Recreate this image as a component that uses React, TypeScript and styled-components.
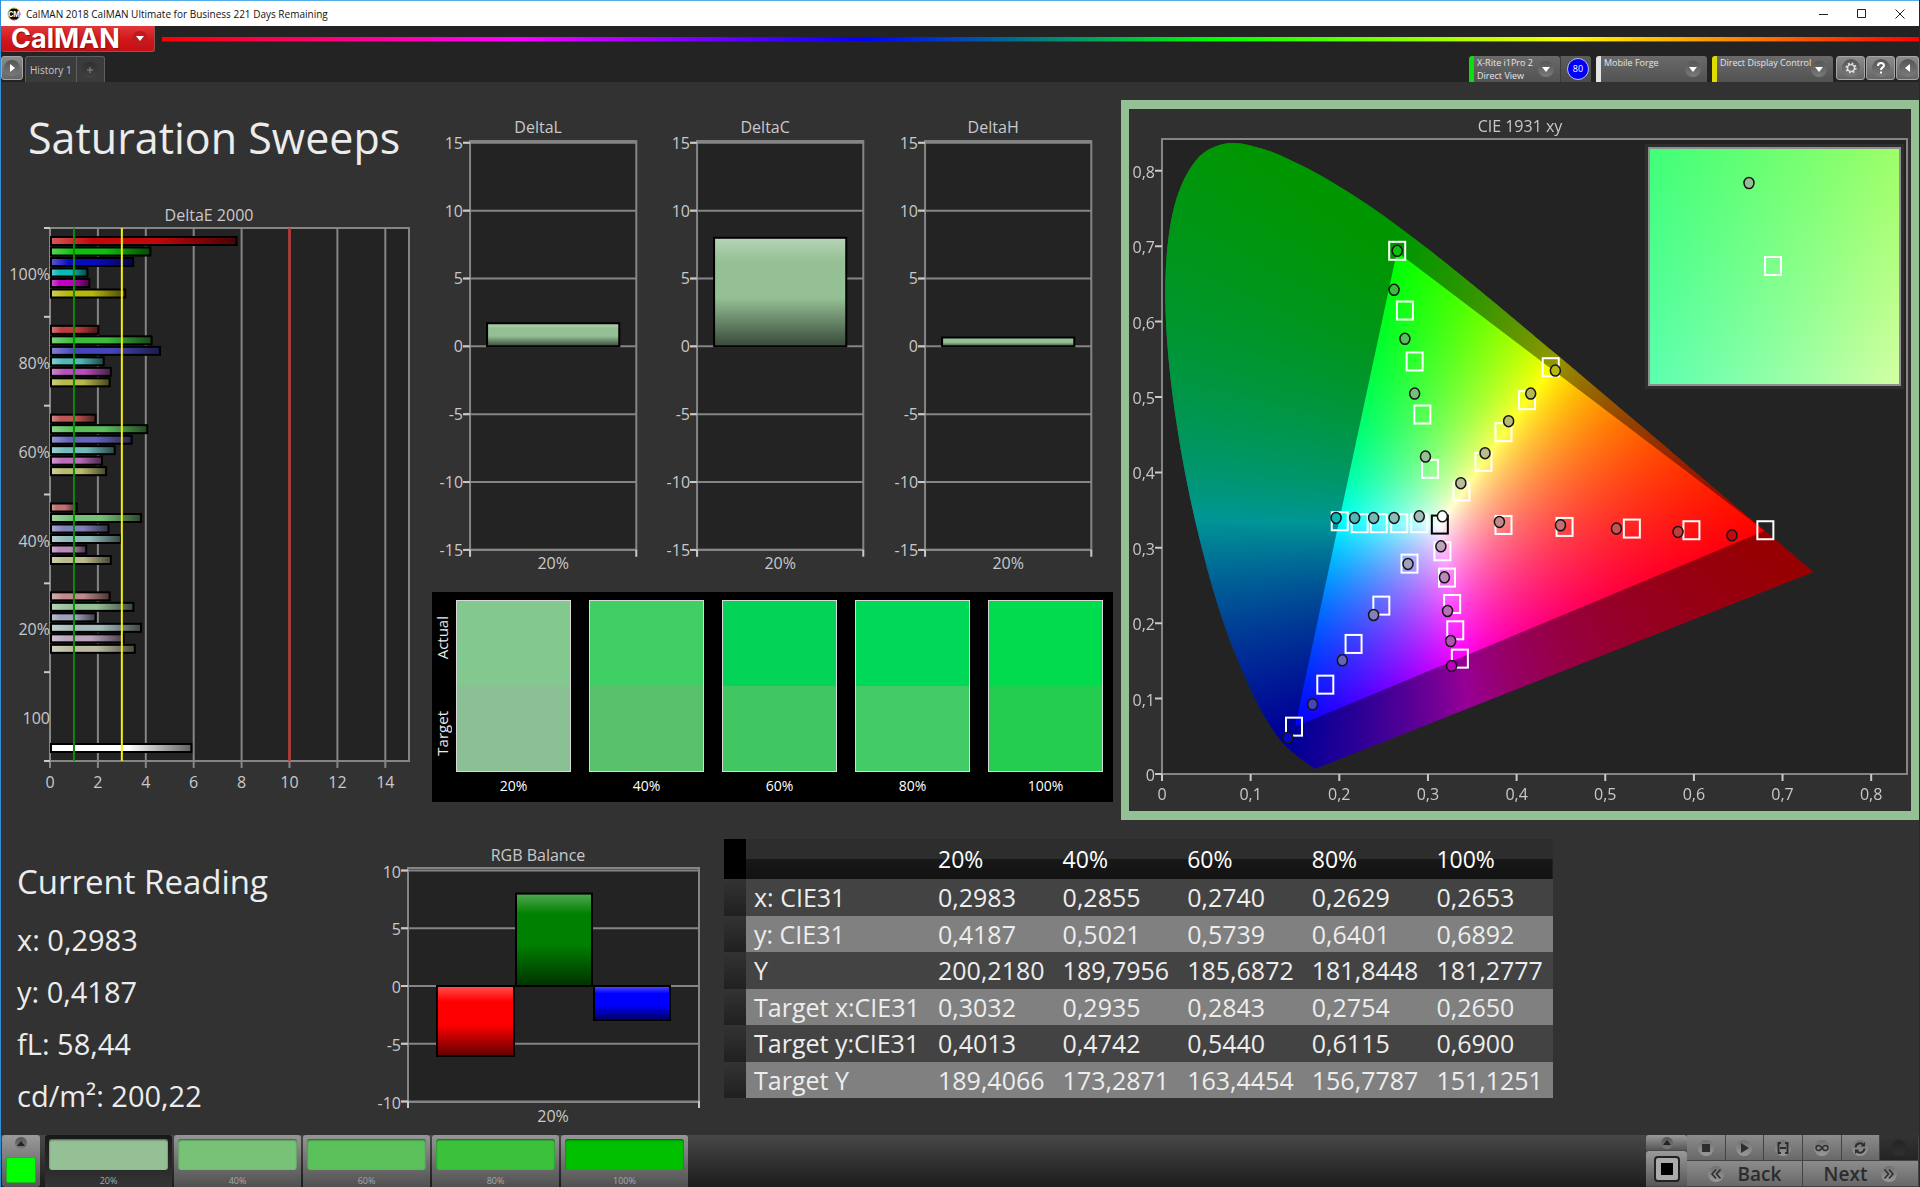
import React, { useEffect, useRef } from "react";
import styled, { createGlobalStyle, css } from "styled-components";

const GlobalStyle = createGlobalStyle`
  *, *::before, *::after { box-sizing: border-box; }
  html, body { margin: 0; padding: 0; background: #323232; }
  body { font-family: "Open Sans", "Noto Sans", sans-serif; color: #ececec; }
  button { font: inherit; color: inherit; border: 0; padding: 0; margin: 0; background: none; }
  h1, h2, p { margin: 0; font-weight: 400; }
`;

/* ---------- window frame ---------- */

const Window = styled.div`
  min-height: 100vh;
  display: flex;
  flex-direction: column;
  border-left: 1px solid #2f8fd2;
  border-right: 1px solid #26282a;
  background: #323232;
`;

const TitleBar = styled.header`
  height: 26px;
  flex: none;
  display: flex;
  align-items: center;
  padding-left: 6px;
  gap: 5px;
  background: #fff;
  border-top: 1px solid #55aee8;
  color: #111;
  font-size: 10px;
  line-height: 16px;
`;

const WindowButtons = styled.div`
  margin-left: auto;
  display: flex;
`;

const WindowButton = styled.button`
  width: 38px;
  height: 25px;
  display: grid;
  place-items: center;
`;

const Brand = styled.div`
  height: 29px;
  flex: none;
  display: flex;
  gap: 7px;
  background: #232323;
`;

const BrandButton = styled.button`
  width: 154px;
  height: 26px;
  padding: 0 6px 0 10px;
  display: flex;
  align-items: center;
  justify-content: space-between;
  background: linear-gradient(#e2383c, #cf1519 60%, #c80f13);
  border: 1px solid #8e5553;
  border-top: 0;
  border-left: 0;
  border-radius: 0 0 3px 3px;
  color: #fff;
  font: 700 27px/24px Inter, sans-serif;
  text-shadow: 1px 1px 1px #7a1012;
`;

const BrandCaret = styled.span`
  width: 16px;
  height: 16px;
  border-radius: 50%;
  display: grid;
  place-items: center;
  background: #bf1a1d;
`;

const Spectrum = styled.div`
  flex: 1;
  height: 5px;
  margin-top: 11px;
  border-bottom: 1px solid rgba(40, 40, 40, 0.6);
  background: linear-gradient(90deg, #f00 0%, #f0f 20%, #00f 40%, #0f0 60%, #ff0 80%, #f00 100%);
`;

const ToolRow = styled.div`
  height: 27px;
  flex: none;
  padding-top: 1px;
  display: flex;
  align-items: flex-start;
  background: #232323;
`;

const RoundWell = styled.span<{ $size?: number; $dark?: boolean }>`
  width: ${(p) => p.$size ?? 16}px;
  height: ${(p) => p.$size ?? 16}px;
  flex: none;
  border-radius: 50%;
  display: grid;
  place-items: center;
  background: ${(p) => (p.$dark ? "linear-gradient(#303030, #424242)" : "linear-gradient(#555, #7b7b7b)")};
`;

const SquareButton = styled.button<{ $w: number }>`
  width: ${(p) => p.$w}px;
  height: 24px;
  display: grid;
  place-items: center;
  border: 1px solid #a5a5a5;
  border-radius: 3px;
  background: linear-gradient(#8c8c8c, #666);
`;

const Tabs = styled.div`
  display: flex;
  margin-left: 2px;
  height: 26px;
  border: 1px solid #5f5f5f;
  border-bottom: 0;
  border-radius: 3px 3px 0 0;
  background: #3b3b3b;
`;

const Tab = styled.button`
  min-width: 28px;
  padding: 0 4px;
  display: flex;
  align-items: center;
  justify-content: center;
  color: #c8c8c8;
  font-size: 10px;
  line-height: 16px;

  & + & {
    border-left: 1px solid #5f5f5f;
  }
`;

const Devices = styled.div`
  margin-left: auto;
  display: flex;
  align-items: flex-start;
`;

const Device = styled.button<{ $accent: string; $w: number }>`
  width: ${(p) => p.$w}px;
  height: 26px;
  display: flex;
  align-items: center;
  padding-right: 6px;
  border-left: 5px solid ${(p) => p.$accent};
  border-radius: 3px 3px 0 0;
  background: linear-gradient(#6a6a6a, #525252);
  color: #e6e6e6;
  font-size: 9px;
  line-height: 13px;
  text-align: left;
`;

const DeviceText = styled.span`
  flex: 1;
  min-width: 0;
  height: 26px;
  padding-left: 3px;
  white-space: pre;
`;

const LevelBox = styled.div`
  width: 31px;
  height: 26px;
  padding-left: 4px;
  display: grid;
  place-items: center;
  background: linear-gradient(#5d5d5d, #4a4a4a);
  border-left: 1px solid #3c3c3c;
  border-radius: 0 3px 0 0;
  margin-right: 5px;
`;

const LevelBadge = styled.button`
  width: 22px;
  height: 22px;
  border-radius: 50%;
  border: 1px solid #b8c0e8;
  background: #0000fa;
  color: #fff;
  font-size: 9px;
  line-height: 12px;
`;

const DeviceGap = styled.div`
  display: flex;
  gap: 5px;
  margin-right: 3px;
`;

const ButtonGroup = styled.div`
  display: flex;
  gap: 1px;
`;

/* ---------- workspace ---------- */

const Main = styled.main`
  flex: 1;
  display: flex;
  flex-direction: column;
`;

const TopRow = styled.div`
  display: grid;
  grid-template-columns: 430fr 690fr 798fr;
  padding-top: 18px;
`;

const BottomRow = styled.div`
  display: grid;
  grid-template-columns: 372fr 351fr 829fr 366fr;
  padding-top: 19px;
`;

const PageTitle = styled.h1`
  height: 95px;
  padding: 6px 0 0 27px;
  font-size: 43px;
  line-height: 64px;
  white-space: nowrap;
`;

const Chart = styled.svg`
  display: block;
  width: 100%;
  height: auto;
  font-family: "Open Sans", "Noto Sans", sans-serif;
  font-size: 16px;

  text {
    fill: #c9c9c9;
  }
`;

const Middle = styled.div`
  min-width: 0;
  padding: 10px 8px 0 0;
`;

const DeltaCharts = styled.div`
  display: grid;
  grid-template-columns: repeat(3, 1fr);
`;

const SwatchPanel = styled.section`
  margin: 11px 0 0 1px;
  height: 210px;
  padding: 8px 10px 0 0;
  display: grid;
  grid-template-columns: 24px 1fr;
  background: #000;
`;

const SideLabels = styled.div`
  height: 172px;
  padding: 16px 4px 16px 0;
  display: flex;
  flex-direction: column;
  justify-content: space-between;
  align-items: center;
  font-size: 15px;
  line-height: 20px;
`;

const SideLabel = styled.span`
  writing-mode: vertical-rl;
  transform: rotate(180deg);
`;

const Swatches = styled.div`
  display: grid;
  grid-template-columns: repeat(5, 1fr);
  column-gap: 18px;
`;

const SwatchItem = styled.figure`
  margin: 0;
  text-align: center;
  font-size: 14px;
  line-height: 20px;

  figcaption {
    margin-top: 4px;
    color: #fff;
  }
`;

const SwatchColor = styled.div<{ $actual: string; $target: string }>`
  height: 172px;
  border: 1px solid #d8d8d8;
  background: linear-gradient(${(p) => p.$actual} 50%, ${(p) => p.$target} 50%);
`;

const CiePanel = styled.section`
  display: grid;
  align-self: start;
  border: solid #95c095;
  border-width: 9px 8px;
  background: #303030;

  > * {
    grid-area: 1 / 1;
  }
`;

const CieCanvas = styled.canvas`
  display: block;
  width: 100%;
  height: auto;
`;

const Reading = styled.section`
  padding: 17px 0 0 16px;
  white-space: nowrap;

  h2 {
    font-size: 33px;
    line-height: 52px;
    margin-bottom: 12px;
  }

  p {
    font-size: 29px;
    line-height: 40px;
    margin-bottom: 12px;
  }
`;

const DataTable = styled.table`
  width: 100%;
  height: 259px;
  align-self: start;
  border-collapse: collapse;
  table-layout: fixed;
  font-size: 25px;
  line-height: 32px;
  white-space: nowrap;
  color: #ededed;

  th,
  td {
    padding: 0 0 0 8px;
    text-align: left;
    font-weight: 400;
  }

  thead tr {
    height: 40px;
    font-size: 23px;
    background: linear-gradient(#2d2d2d 50%, #181818 50%, #121212);
    color: #fff;
  }

  tbody tr {
    background: #434343;
  }

  tbody tr:nth-child(even) {
    background: #808080;
  }
`;

const Marker = styled.td<{ $head?: boolean }>`
  background: ${(p) => (p.$head ? "#000" : "linear-gradient(#333, #202020)")};
`;

/* ---------- bottom bar ---------- */

const BottomBar = styled.footer`
  height: 52px;
  flex: none;
  display: flex;
  background: linear-gradient(#484848, #1c1c1c);
`;

const grey = css`
  background: linear-gradient(#9a9a9a, #565656);
`;

const CurrentPatch = styled.button`
  ${grey}
  width: 38px;
  margin: 0 5px 0 1px;
  border-radius: 3px;
  display: flex;
  flex-direction: column;
  align-items: center;
  justify-content: space-between;
  padding: 2px 0 4px;
`;

const PatchSquare = styled.span`
  width: 30px;
  height: 26px;
  border-radius: 2px;
  background: #00ff00;
  border: 1px solid #1fb41f;
`;

const Patches = styled.div`
  display: flex;
  gap: 2px;
`;

const Patch = styled.button<{ $active?: boolean }>`
  width: 127px;
  height: 52px;
  padding: 4px 4px 0;
  border-radius: 3px 3px 0 0;
  color: #a9a9a9;
  font-size: 9px;
  line-height: 14px;
  background: ${(p) => (p.$active ? "linear-gradient(#181818, #353535)" : "linear-gradient(#969696, #505050)")};
`;

const PatchColor = styled.span<{ $color: string }>`
  display: block;
  height: 31px;
  margin-bottom: 4px;
  border-radius: 3px;
  background: ${(p) => p.$color};
  box-shadow: inset 0 1px 2px rgba(0, 0, 0, 0.55);
`;

const Controls = styled.div`
  margin-left: auto;
  display: grid;
  grid-template-columns: 41px 232px;
`;

const TargetColumn = styled.div`
  display: grid;
  grid-template-rows: 16px 36px;
`;

const TargetButton = styled.button`
  ${grey}
  display: grid;
  place-items: center;
  border-bottom: 1px solid #4b4b4b;
  border-radius: 3px 3px 0 0;
`;

const StopFrame = styled.span`
  width: 26px;
  height: 26px;
  display: grid;
  place-items: center;
  border: 2px solid #222;
  border-radius: 4px;
  background: #aaa;

  &::after {
    content: "";
    width: 12px;
    height: 12px;
    background: #000;
  }
`;

const Transport = styled.div`
  display: grid;
  grid-template-rows: 26px 26px;
`;

const TransportRow = styled.div<{ $cols: number }>`
  display: grid;
  grid-template-columns: repeat(${(p) => p.$cols}, 1fr);
`;

const TransportButton = styled.button<{ $off?: boolean }>`
  display: flex;
  align-items: center;
  justify-content: center;
  gap: 14px;
  border-right: 1px solid #444;
  border-bottom: 1px solid #444;
  background: ${(p) => (p.$off ? "linear-gradient(#333, #242424)" : "linear-gradient(#8c8c8c, #686868)")};
  color: #2c2c2c;
  font-size: 19px;
  line-height: 24px;
  font-weight: 600;

  ${RoundWell} {
    background: ${(p) => (p.$off ? "linear-gradient(#242424, #303030)" : "linear-gradient(#707070, #9a9a9a)")};
  }
`;

/* ---------- chart data ---------- */

type Hue = "red" | "green" | "blue" | "cyan" | "magenta" | "yellow";
const HUE_NAMES: Hue[] = ["red", "green", "blue", "cyan", "magenta", "yellow"];

// Fill colours from 20% to 100% saturation
const HUES: Record<Hue, string[]> = {
  red: ["#c08a8a", "#bf7070", "#bf5555", "#c03c3c", "#c40808"],
  green: ["#95c095", "#77bf77", "#5abf5a", "#3cbc3c", "#0cc00c"],
  blue: ["#a0a0bf", "#8282bb", "#6464bb", "#4646bc", "#0a0abf"],
  cyan: ["#a6bcbc", "#8fbaba", "#72baba", "#50b8b8", "#0cb8b8"],
  magenta: ["#bca4bc", "#bb8abb", "#bb6dbb", "#b84fb8", "#c000c0"],
  yellow: ["#bcbca0", "#bbbb8c", "#bbbb70", "#b8b84c", "#b8b80c"],
};

const DELTA_E: { label: string; level: number; values: number[] }[] = [
  { label: "100%", level: 4, values: [7.75, 4.15, 3.43, 1.52, 1.6, 3.1] },
  { label: "80%", level: 3, values: [1.98, 4.2, 4.55, 2.2, 2.5, 2.45] },
  { label: "60%", level: 2, values: [1.86, 4.02, 3.37, 2.66, 2.13, 2.3] },
  { label: "40%", level: 1, values: [1.07, 3.76, 2.4, 2.92, 1.47, 2.5] },
  { label: "20%", level: 0, values: [2.45, 3.44, 1.86, 3.76, 3.03, 3.5] },
];

const SWATCHES = [
  ["20%", "#82c88f", "#8ac093"],
  ["40%", "#3fcf64", "#59c06c"],
  ["60%", "#03d457", "#40c762"],
  ["80%", "#00d957", "#42cb67"],
  ["100%", "#00dc4e", "#24cd4f"],
];

const TABLE_ROWS = [
  ["x: CIE31", "0,2983", "0,2855", "0,2740", "0,2629", "0,2653"],
  ["y: CIE31", "0,4187", "0,5021", "0,5739", "0,6401", "0,6892"],
  ["Y", "200,2180", "189,7956", "185,6872", "181,8448", "181,2777"],
  ["Target x:CIE31", "0,3032", "0,2935", "0,2843", "0,2754", "0,2650"],
  ["Target y:CIE31", "0,4013", "0,4742", "0,5440", "0,6115", "0,6900"],
  ["Target Y", "189,4066", "173,2871", "163,4454", "156,7787", "151,1251"],
];

type XY = [number, number];

const TARGETS: Record<Hue, XY[]> = {
  green: [[0.3024, 0.4047], [0.2937, 0.4768], [0.285, 0.5471], [0.274, 0.6147], [0.2653, 0.6939]],
  yellow: [[0.3377, 0.3746], [0.3626, 0.414], [0.3852, 0.4533], [0.4118, 0.4958], [0.4385, 0.5395]],
  cyan: [[0.2902, 0.3326], [0.2676, 0.3326], [0.2445, 0.3326], [0.223, 0.3326], [0.2005, 0.3352]],
  red: [[0.3852, 0.3303], [0.4541, 0.3277], [0.53, 0.3255], [0.5972, 0.3233], [0.6806, 0.3233]],
  magenta: [[0.3163, 0.2954], [0.3215, 0.2605], [0.3273, 0.2255], [0.3308, 0.1906], [0.336, 0.153]],
  blue: [[0.2792, 0.279], [0.2474, 0.2233], [0.2161, 0.1725], [0.1842, 0.1185], [0.1489, 0.0628]],
};

const ACTUALS: Record<Hue, XY[]> = {
  green: [[0.2972, 0.421], [0.285, 0.5046], [0.274, 0.5771], [0.2618, 0.6421], [0.2653, 0.6939]],
  yellow: [[0.3371, 0.3857], [0.3644, 0.4255], [0.391, 0.4679], [0.4159, 0.5046], [0.4437, 0.5351]],
  cyan: [[0.2902, 0.3418], [0.2618, 0.3396], [0.2387, 0.3396], [0.2173, 0.3396], [0.1964, 0.3396]],
  red: [[0.3806, 0.3343], [0.4495, 0.3299], [0.5126, 0.3255], [0.5821, 0.3211], [0.6429, 0.3166]],
  magenta: [[0.3146, 0.302], [0.3186, 0.2609], [0.3221, 0.2162], [0.3256, 0.1764], [0.3267, 0.1433]],
  blue: [[0.2775, 0.2786], [0.2387, 0.2109], [0.2034, 0.1508], [0.1698, 0.0924], [0.142, 0.0482]],
};

// Spectral locus, 420 nm to 700 nm
const LOCUS: XY[] = [
  [0.1741, 0.005], [0.1714, 0.0051], [0.1689, 0.0069], [0.1644, 0.0109], [0.1566, 0.0177], [0.151, 0.0227],
  [0.144, 0.0297], [0.1355, 0.0399], [0.1241, 0.0578], [0.1096, 0.0868], [0.0913, 0.1327], [0.0687, 0.2007],
  [0.0454, 0.295], [0.0235, 0.4127], [0.0082, 0.5384], [0.0039, 0.6548], [0.0139, 0.7502], [0.0389, 0.812],
  [0.0743, 0.8338], [0.1142, 0.8262], [0.1547, 0.8059], [0.1929, 0.7816], [0.2296, 0.7543], [0.2658, 0.7243],
  [0.3016, 0.6923], [0.3373, 0.6589], [0.3731, 0.6245], [0.4441, 0.5547], [0.5125, 0.4866], [0.5752, 0.4242],
  [0.627, 0.3725], [0.6658, 0.334], [0.6915, 0.3083], [0.719, 0.2809], [0.7347, 0.2653],
];

/* ---------- shared drawing helpers ---------- */

const GRID = "#858585";
const PLOT = "#232323";

function Shine({ id, vertical }: { id: string; vertical?: boolean }) {
  return (
    <linearGradient id={id} x1="0" y1="0" x2={vertical ? 0 : 1} y2={vertical ? 1 : 0}>
      <stop offset="0" stopColor="#fff" stopOpacity="0.32" />
      <stop offset="0.22" stopColor="#fff" stopOpacity="0" />
      <stop offset="0.55" stopColor="#000" stopOpacity="0" />
      <stop offset="1" stopColor="#000" stopOpacity="0.62" />
    </linearGradient>
  );
}

interface BarProps {
  x: number;
  y: number;
  w: number;
  h: number;
  color: string;
  shine: string;
}

function Bar({ x, y, w, h, color, shine }: BarProps) {
  return (
    <g>
      <rect x={x} y={y} width={w} height={h} fill={color} />
      <rect x={x} y={y} width={w} height={h} fill={`url(#${shine})`} stroke="#000" strokeWidth={2} />
    </g>
  );
}

const Caret = () => (
  <svg width="8" height="5" viewBox="0 0 8 5" aria-hidden="true">
    <path d="M0 0h8L4 5z" fill="#fff" />
  </svg>
);

const UpArrow = () => (
  <svg width="8" height="5" viewBox="0 0 8 5" aria-hidden="true">
    <path d="M4 0l4 5H0z" fill="#222" />
  </svg>
);

/* ---------- charts ---------- */

function DeltaEChart() {
  const left = 49;
  const unit = 23.95;
  const top = 33;
  const bottom = 566;
  const step = (bottom - top) / 6;
  return (
    <Chart viewBox="0 0 430 600" role="img" aria-label="DeltaE 2000">
      <defs>
        <Shine id="shine-h" />
      </defs>
      <text x={208} y={26} textAnchor="middle">DeltaE 2000</text>
      <rect x={left} y={top} width={359} height={bottom - top} fill={PLOT} stroke={GRID} strokeWidth={2} />
      {[0, 2, 4, 6, 8, 10, 12, 14].map((v) => (
        <g key={v}>
          <path d={`M${left + v * unit} ${top}V${bottom + 7}`} stroke={GRID} strokeWidth={2} />
          <text x={left + v * unit} y={593} textAnchor="middle">{v}</text>
        </g>
      ))}
      {[0, 1, 2, 3, 4, 5, 6].map((i) => (
        <path key={i} d={`M${left - 6} ${top + i * step}H${left}`} stroke="#c9c9c9" strokeWidth={2} />
      ))}
      {DELTA_E.map((group, g) => (
        <g key={group.label}>
          {HUE_NAMES.map((hue, i) => (
            <Bar
              key={hue}
              x={left + 1}
              y={top + g * step + 9 + i * 10.5}
              w={group.values[i] * unit}
              h={8}
              color={HUES[hue][group.level]}
              shine="shine-h"
            />
          ))}
          <text x={left} y={top + g * step + 52} textAnchor="end">{group.label}</text>
        </g>
      ))}
      <Bar x={left + 1} y={549} w={5.86 * unit} h={8} color="#fff" shine="shine-h" />
      <text x={left} y={top + 5 * step + 52} textAnchor="end">100</text>
      <path d={`M${left + unit} ${top}V${bottom}`} stroke="#0a8a0a" strokeWidth={2} />
      <path d={`M${left + 3 * unit} ${top}V${bottom}`} stroke="#f4ee10" strokeWidth={2} />
      <path d={`M${left + 10 * unit} ${top}V${bottom}`} stroke="#f02020" strokeWidth={2} />
    </Chart>
  );
}

function DeltaChart({ title, value }: { title: string; value: number }) {
  const id = `shine-${title}`;
  const y = (v: number) => 236 - v * 13.55;
  return (
    <Chart viewBox="0 0 227 470" role="img" aria-label={title}>
      <defs>
        <Shine id={id} vertical />
      </defs>
      <text x={107} y={23} textAnchor="middle">{title}</text>
      <rect x={39} y={31} width={166} height={408} fill={PLOT} stroke={GRID} strokeWidth={2} />
      {[15, 10, 5, 0, -5, -10, -15].map((v) => (
        <g key={v}>
          <path d={`M32 ${y(v)}H205`} stroke={GRID} strokeWidth={2} />
          <path d={`M32 ${y(v)}H39`} stroke="#c9c9c9" strokeWidth={2} />
          <text x={32} y={y(v) + 6} textAnchor="end">{v}</text>
        </g>
      ))}
      <path d="M39 439V446M205 439V446" stroke="#c9c9c9" strokeWidth={2} />
      <Bar x={56} y={y(value)} w={132} h={value * 13.55} color="#95c095" shine={id} />
      <text x={122} y={458} textAnchor="middle">20%</text>
    </Chart>
  );
}

function RgbChart() {
  const y = (v: number) => 147 - v * 11.55;
  return (
    <Chart viewBox="0 0 351 290" role="img" aria-label="RGB Balance">
      <defs>
        <Shine id="shine-rgb" vertical />
      </defs>
      <text x={165} y={22} textAnchor="middle">RGB Balance</text>
      <rect x={35} y={29} width={291} height={234} fill={PLOT} stroke={GRID} strokeWidth={2} />
      {[10, 5, 0, -5, -10].map((v) => (
        <g key={v}>
          <path d={`M28 ${y(v)}H326`} stroke={GRID} strokeWidth={2} />
          <path d={`M28 ${y(v)}H35`} stroke="#c9c9c9" strokeWidth={2} />
          <text x={28} y={y(v) + 7} textAnchor="end">{v}</text>
        </g>
      ))}
      <path d="M35 262V269M326 262V269" stroke="#c9c9c9" strokeWidth={2} />
      <Bar x={64} y={y(0)} w={77} h={70} color="#ff0000" shine="shine-rgb" />
      <Bar x={143} y={y(8)} w={76} h={8 * 11.55} color="#008000" shine="shine-rgb" />
      <Bar x={221} y={y(0)} w={76} h={34} color="#0000ff" shine="shine-rgb" />
      <text x={180} y={283} textAnchor="middle">20%</text>
    </Chart>
  );
}

const CIE = { w: 782, h: 702, left: 33, top: 30, right: 778, bottom: 665, sx: 886.5, sy: 754 };
const INSET = { x: 520, y: 39, w: 251, h: 237 };
const px = (x: number) => CIE.left + x * CIE.sx;
const py = (y: number) => CIE.bottom - y * CIE.sy;

// Brightest P3 colour of a chromaticity, with out-of-gamut channels clipped
function chromaToRgb(x: number, y: number): [number, number, number] {
  const yy = Math.max(y, 0.0005);
  const X = x / yy;
  const Z = (1 - x - yy) / yy;
  const r = Math.max(0, 2.4935 * X - 0.9314 - 0.4027 * Z);
  const g = Math.max(0, -0.8295 * X + 1.7627 + 0.0236 * Z);
  const b = Math.max(0, 0.0358 * X - 0.0762 + 0.9569 * Z);
  const m = Math.max(r, g, b, 0.0001);
  return [(r / m) * 255, (g / m) * 255, (b / m) * 255];
}

function paintField(w: number, h: number, toXY: (i: number, j: number) => XY) {
  const buffer = document.createElement("canvas");
  buffer.width = w;
  buffer.height = h;
  const ctx = buffer.getContext("2d")!;
  const image = ctx.createImageData(w, h);
  for (let j = 0; j < h; j++) {
    for (let i = 0; i < w; i++) {
      const [x, y] = toXY(i, j);
      const [r, g, b] = chromaToRgb(x, y);
      const k = (j * w + i) * 4;
      image.data[k] = r;
      image.data[k + 1] = g;
      image.data[k + 2] = b;
      image.data[k + 3] = 255;
    }
  }
  ctx.putImageData(image, 0, 0);
  return buffer;
}

function locusPath(): Path2D {
  const path = new Path2D();
  const p = LOCUS.map(([x, y]) => [px(x), py(y)]);
  path.moveTo(p[0][0], p[0][1]);
  for (let i = 0; i < p.length - 1; i++) {
    const a = p[Math.max(0, i - 1)];
    const b = p[i];
    const c = p[i + 1];
    const d = p[Math.min(p.length - 1, i + 2)];
    path.bezierCurveTo(
      b[0] + (c[0] - a[0]) / 6, b[1] + (c[1] - a[1]) / 6,
      c[0] - (d[0] - b[0]) / 6, c[1] - (d[1] - b[1]) / 6,
      c[0], c[1],
    );
  }
  path.closePath();
  return path;
}

function drawGamut(ctx: CanvasRenderingContext2D) {
  ctx.fillStyle = PLOT;
  ctx.fillRect(CIE.left, CIE.top, CIE.right - CIE.left, CIE.bottom - CIE.top);

  const locus = locusPath();
  ctx.save();
  ctx.translate(0, -2);
  ctx.clip(locus);
  const field = paintField(CIE.w, CIE.h, (i, j) => [(i - CIE.left) / CIE.sx, (CIE.bottom - j) / CIE.sy]);
  ctx.drawImage(field, 0, 0);
  const outside = new Path2D();
  outside.rect(0, 0, CIE.w, CIE.h);
  outside.moveTo(px(0.68), py(0.32));
  outside.lineTo(px(0.265), py(0.69));
  outside.lineTo(px(0.15), py(0.06));
  outside.closePath();
  ctx.fillStyle = "rgba(0, 0, 0, 0.41)";
  ctx.fill(outside, "evenodd");
  ctx.restore();

  ctx.fillStyle = "#2e2e2e";
  ctx.fillRect(INSET.x - 4, INSET.y - 4, INSET.w + 8, INSET.h + 8);
  const zoomed = paintField(INSET.w, INSET.h, (i, j) => [
    0.2965 + ((i - INSET.w / 2) / INSET.w) * 0.06,
    0.409 - ((j - INSET.h / 2) / INSET.h) * 0.055,
  ]);
  ctx.drawImage(zoomed, INSET.x, INSET.y);
}

function TargetMark({ at, color = "#fff" }: { at: XY; color?: string }) {
  return <rect x={at[0] - 8} y={at[1] - 9} width={16} height={18} fill="none" stroke={color} strokeWidth={2} />;
}

function ActualMark({ at, fill }: { at: XY; fill: string }) {
  return <ellipse cx={at[0]} cy={at[1]} rx={5} ry={5.5} fill={fill} stroke="#151515" strokeWidth={1.5} />;
}

const toPlot = ([x, y]: XY): XY => [px(x), py(y)];
const comma = (v: number) => (v === 0 ? "0" : v.toFixed(1).replace(".", ","));

function CieChart() {
  const ref = useRef<HTMLCanvasElement>(null);
  useEffect(() => {
    const ctx = ref.current?.getContext("2d");
    if (ctx) drawGamut(ctx);
  }, []);
  const marks = [0, 1, 2, 3, 4, 5, 6, 7, 8].map((n) => n / 10);
  return (
    <CiePanel>
      <CieCanvas ref={ref} width={CIE.w} height={CIE.h} aria-hidden="true" />
      <Chart viewBox={`0 0 ${CIE.w} ${CIE.h}`} role="img" aria-label="CIE 1931 xy">
        <text x={391} y={23} textAnchor="middle">CIE 1931 xy</text>
        <rect
          x={CIE.left}
          y={CIE.top}
          width={CIE.right - CIE.left}
          height={CIE.bottom - CIE.top}
          fill="none"
          stroke={GRID}
          strokeWidth={2}
        />
        {marks.map((v) => (
          <g key={v}>
            <path d={`M${px(v)} ${CIE.bottom}V${CIE.bottom + 7}M${CIE.left - 7} ${py(v)}H${CIE.left}`} stroke="#c9c9c9" strokeWidth={2} />
            <text x={px(v)} y={691} textAnchor="middle">{comma(v)}</text>
            <text x={CIE.left - 7} y={py(v) + 7} textAnchor="end">{comma(v)}</text>
          </g>
        ))}
        {HUE_NAMES.map((hue) => TARGETS[hue].map((p, i) => <TargetMark key={`${hue}${i}`} at={toPlot(p)} />))}
        <TargetMark at={toPlot([0.3134, 0.3308])} color="#000" />
        {HUE_NAMES.map((hue) =>
          ACTUALS[hue].map((p, i) => <ActualMark key={`${hue}${i}`} at={toPlot(p)} fill={HUES[hue][i]} />),
        )}
        <ActualMark at={toPlot([0.3163, 0.3418])} fill="#fff" />
        <rect x={INSET.x} y={INSET.y} width={INSET.w} height={INSET.h} fill="none" stroke="#8f8f8f" strokeWidth={2} />
        <TargetMark at={[644, 157]} />
        <ActualMark at={[620, 74]} fill="#95c095" />
      </Chart>
    </CiePanel>
  );
}

/* ---------- icons ---------- */

const ink = "#2e2e2e";

const icons = {
  stop: <path d="M4 4h8v8H4z" fill={ink} />,
  play: <path d="M5 3l8 5-8 5z" fill={ink} />,
  range: <path d="M6 3H3.5v10H6M10 3h2.5v10H10M5 8h6" fill="none" stroke={ink} strokeWidth="2" />,
  loop: (
    <path
      d="M8 8C7 6.500 6 5.500 4.500 5.500a2.500 2.500 0 0 0 0 5C6 10.500 7 9.500 8 8s2-2.500 3.500-2.500a2.500 2.500 0 0 1 0 5C10 10.500 9 9.500 8 8z"
      fill="none"
      stroke={ink}
      strokeWidth="1.500"
    />
  ),
  refresh: (
    <g fill="none" stroke={ink} strokeWidth="2">
      <path d="M3.500 7.500a4.500 4.500 0 0 1 8-2.500M12.500 8.500a4.500 4.500 0 0 1-8 2.500" />
      <path d="M13 2v4.500H8.500zM3 14V9.500h4.500z" fill={ink} stroke="none" />
    </g>
  ),
  back: <path d="M8 3.500L4 8l4 4.500M12.500 3.500l-4 4.500 4 4.500" fill="none" stroke={ink} strokeWidth="1.600" />,
  next: <path d="M3.500 3.500l4 4.500-4 4.500M8 3.500L12 8l-4 4.500" fill="none" stroke={ink} strokeWidth="1.600" />,
};

function Glyph({ name }: { name: keyof typeof icons }) {
  return (
    <svg width="16" height="16" viewBox="0 0 16 16" aria-hidden="true">
      {icons[name]}
    </svg>
  );
}

const AppIcon = () => (
  <svg width="14" height="14" viewBox="0 0 14 14" aria-hidden="true">
    <defs>
      <linearGradient id="ring" x1="0" y1="0" x2="1" y2="1">
        <stop offset="0" stopColor="#2ad04a" />
        <stop offset="0.4" stopColor="#e8c020" />
        <stop offset="0.7" stopColor="#e02060" />
        <stop offset="1" stopColor="#5030e0" />
      </linearGradient>
    </defs>
    <circle cx="7" cy="7" r="6" fill="#0a0a0a" stroke="url(#ring)" strokeWidth="1" />
    <text x="7" y="9.500" fontSize="7" fontWeight="700" textAnchor="middle" fill="#fff" fontFamily="Inter, sans-serif">CM</text>
  </svg>
);

/* ---------- app ---------- */

const LEVELS = ["20%", "40%", "60%", "80%", "100%"];
const PATCH_COLORS = ["#95c095", "#77c277", "#5ac15a", "#3cc13c", "#00c000"];
const TRANSPORT: { name: keyof typeof icons; label: string }[] = [
  { name: "stop", label: "Stop" },
  { name: "play", label: "Read" },
  { name: "range", label: "Read series" },
  { name: "loop", label: "Read continuously" },
  { name: "refresh", label: "Refresh" },
];

export default function App() {
  return (
    <Window>
      <GlobalStyle />
      <TitleBar>
        <AppIcon />
        <span>CalMAN 2018 CalMAN Ultimate for Business 221 Days Remaining</span>
        <WindowButtons>
          <WindowButton aria-label="Minimize">
            <svg width="10" height="10" viewBox="0 0 10 10"><path d="M0 5.500h9" stroke="#222" /></svg>
          </WindowButton>
          <WindowButton aria-label="Maximize">
            <svg width="10" height="10" viewBox="0 0 10 10"><path d="M.5.5h8v8h-8z" fill="none" stroke="#222" /></svg>
          </WindowButton>
          <WindowButton aria-label="Close">
            <svg width="10" height="10" viewBox="0 0 10 10"><path d="M.5.5l9 9M9.500.5l-9 9" stroke="#222" /></svg>
          </WindowButton>
        </WindowButtons>
      </TitleBar>

      <Brand>
        <BrandButton>
          CalMAN
          <BrandCaret><Caret /></BrandCaret>
        </BrandButton>
        <Spectrum />
      </Brand>

      <ToolRow>
        <SquareButton $w={22} aria-label="Show panel">
          <RoundWell>
            <svg width="5" height="8" viewBox="0 0 5 8"><path d="M0 0l5 4-5 4z" fill="#fff" /></svg>
          </RoundWell>
        </SquareButton>
        <Tabs>
          <Tab>History 1</Tab>
          <Tab aria-label="Add history">
            <RoundWell $dark>
              <svg width="6" height="6" viewBox="0 0 6 6"><path d="M3 0v6M0 3h6" stroke="#8a8a8a" /></svg>
            </RoundWell>
          </Tab>
        </Tabs>
        <Devices>
          <Device $accent="#0ae00a" $w={91}>
            <DeviceText>{"X-Rite i1Pro 2\nDirect View"}</DeviceText>
            <RoundWell><Caret /></RoundWell>
          </Device>
          <LevelBox><LevelBadge>80</LevelBadge></LevelBox>
          <DeviceGap>
            <Device $accent="#e4e4e4" $w={111}>
              <DeviceText>Mobile Forge</DeviceText>
              <RoundWell><Caret /></RoundWell>
            </Device>
            <Device $accent="#e0dc00" $w={121}>
              <DeviceText>Direct Display Control</DeviceText>
              <RoundWell><Caret /></RoundWell>
            </Device>
          </DeviceGap>
          <ButtonGroup>
            <SquareButton $w={29} aria-label="Settings">
              <RoundWell $size={18}>
                <svg width="12" height="12" viewBox="0 0 12 12">
                  <circle cx="6" cy="6" r="4.600" fill="none" stroke="#e0e0e0" strokeWidth="2" strokeDasharray="1.800 1.810" />
                  <circle cx="6" cy="6" r="3.400" fill="none" stroke="#e0e0e0" strokeWidth="1.400" />
                </svg>
              </RoundWell>
            </SquareButton>
            <SquareButton $w={29} aria-label="Help">
              <RoundWell $size={18}>
                <svg width="10" height="12" viewBox="0 0 10 12">
                  <path d="M2 4c0-4 6-3.800 6-.6C8 5.500 5 5.400 5 8" fill="none" stroke="#fff" strokeWidth="2" />
                  <path d="M4 9.500h2v2H4z" fill="#fff" />
                </svg>
              </RoundWell>
            </SquareButton>
            <SquareButton $w={23} aria-label="Hide panel">
              <RoundWell $size={18}>
                <svg width="5" height="8" viewBox="0 0 5 8"><path d="M5 0L0 4l5 4z" fill="#fff" /></svg>
              </RoundWell>
            </SquareButton>
          </ButtonGroup>
        </Devices>
      </ToolRow>

      <Main>
        <TopRow>
          <div>
            <PageTitle>Saturation Sweeps</PageTitle>
            <DeltaEChart />
          </div>
          <Middle>
            <DeltaCharts>
              <DeltaChart title="DeltaL" value={1.7} />
              <DeltaChart title="DeltaC" value={8} />
              <DeltaChart title="DeltaH" value={0.65} />
            </DeltaCharts>
            <SwatchPanel>
              <SideLabels>
                <SideLabel>Actual</SideLabel>
                <SideLabel>Target</SideLabel>
              </SideLabels>
              <Swatches>
                {SWATCHES.map(([label, actual, target]) => (
                  <SwatchItem key={label}>
                    <SwatchColor $actual={actual} $target={target} />
                    <figcaption>{label}</figcaption>
                  </SwatchItem>
                ))}
              </Swatches>
            </SwatchPanel>
          </Middle>
          <CieChart />
        </TopRow>

        <BottomRow>
          <Reading>
            <h2>Current Reading</h2>
            <p>x: 0,2983</p>
            <p>y: 0,4187</p>
            <p>fL: 58,44</p>
            <p>cd/m²: 200,22</p>
          </Reading>
          <RgbChart />
          <DataTable>
            <colgroup>
              <col style={{ width: "22px" }} />
              <col style={{ width: "184px" }} />
              <col span={5} />
            </colgroup>
            <thead>
              <tr>
                <Marker $head />
                <td />
                {LEVELS.map((l) => <th key={l} scope="col">{l}</th>)}
              </tr>
            </thead>
            <tbody>
              {TABLE_ROWS.map(([label, ...cells]) => (
                <tr key={label}>
                  <Marker />
                  <th scope="row">{label}</th>
                  {cells.map((c) => <td key={c}>{c}</td>)}
                </tr>
              ))}
            </tbody>
          </DataTable>
        </BottomRow>
      </Main>

      <BottomBar>
        <CurrentPatch aria-label="Current patch">
          <RoundWell $size={12}><UpArrow /></RoundWell>
          <PatchSquare />
        </CurrentPatch>
        <Patches>
          {LEVELS.map((l, i) => (
            <Patch key={l} $active={i === 0}>
              <PatchColor $color={PATCH_COLORS[i]} />
              {l}
            </Patch>
          ))}
        </Patches>
        <Controls>
          <TargetColumn>
            <TargetButton aria-label="Expand">
              <RoundWell $size={12}><UpArrow /></RoundWell>
            </TargetButton>
            <TargetButton aria-label="Pattern window"><StopFrame /></TargetButton>
          </TargetColumn>
          <Transport>
            <TransportRow $cols={6}>
              {TRANSPORT.map((t) => (
                <TransportButton key={t.name} aria-label={t.label}>
                  <RoundWell><Glyph name={t.name} /></RoundWell>
                </TransportButton>
              ))}
              <TransportButton $off disabled aria-label="Record">
                <RoundWell $dark />
              </TransportButton>
            </TransportRow>
            <TransportRow $cols={2}>
              <TransportButton>
                <RoundWell><Glyph name="back" /></RoundWell>
                Back
              </TransportButton>
              <TransportButton>
                Next
                <RoundWell><Glyph name="next" /></RoundWell>
              </TransportButton>
            </TransportRow>
          </Transport>
        </Controls>
      </BottomBar>
    </Window>
  );
}
